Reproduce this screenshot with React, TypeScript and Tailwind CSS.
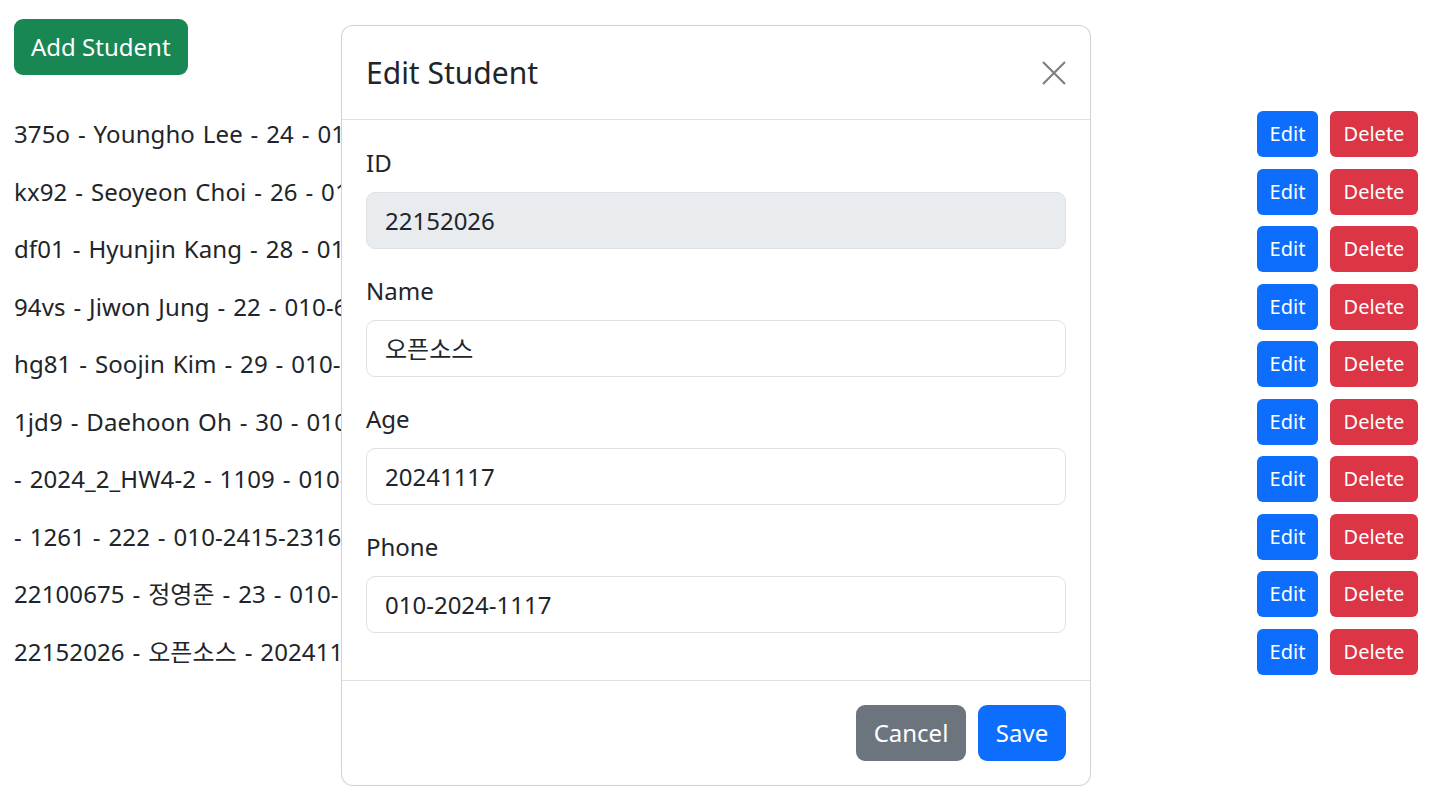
import React from 'react'

const students = [
  '375o - Youngho Lee - 24 - 010-1234-5678',
  'kx92 - Seoyeon Choi - 26 - 010-2345-6789',
  'df01 - Hyunjin Kang - 28 - 010-3456-7890',
  '94vs - Jiwon Jung - 22 - 010-6543-2109',
  'hg81 - Soojin Kim - 29 - 010-7654-3210',
  '1jd9 - Daehoon Oh - 30 - 010-8765-4321',
  ' - 2024_2_HW4-2 - 1109 - 010-1109-2024',
  ' - 1261 - 222 - 010-2415-2316',
  '22100675 - 정영준 - 23 - 010-1234-0675',
  '22152026 - 오픈소스 - 20241117 - 010-2024-1117',
]

const fields = [
  { label: 'ID', value: '22152026', readOnly: true },
  { label: 'Name', value: '오픈소스', readOnly: false },
  { label: 'Age', value: '20241117', readOnly: false },
  { label: 'Phone', value: '010-2024-1117', readOnly: false },
]

const App = () => {
  return (
    <div
      className="relative min-h-[801px] bg-white text-[#212529] text-[24px] leading-[36px]"
      style={{ fontFamily: '"Noto Sans", "Noto Sans CJK KR", sans-serif' }}
    >
      <div className="pl-[14px] pr-[19px] pt-[19px]">
        <button className="h-[56px] px-[17px] rounded-[9px] bg-[#198754] text-white text-[24px]">
          Add Student
        </button>

        <ul className="mt-[36px] flex flex-col gap-[11.5px]">
          {students.map((s, i) => (
            <li key={i} className="h-[46px] flex items-center justify-between">
              <span className="[word-spacing:1.5px] tracking-[0.1px]">{s.trim()}</span>
              <div className="flex gap-[12px]">
                <button className="h-[46px] w-[61px] rounded-[6px] bg-[#0d6efd] text-white text-[20px]">Edit</button>
                <button className="h-[46px] w-[88px] rounded-[6px] bg-[#dc3545] text-white text-[20px]">Delete</button>
              </div>
            </li>
          ))}
        </ul>
      </div>

      {/* modal */}
      <div className="absolute left-[341px] top-[25px] w-[750px] h-[761px] bg-white border border-black/[0.175] rounded-[12px] flex flex-col">
        <div className="h-[94px] px-[24px] flex items-center justify-between border-b border-[#dee2e6]">
          <h5 className="text-[30px] leading-[36px] font-normal">Edit Student</h5>
          <button className="w-[24px] h-[24px] text-[#808080]">
            <svg viewBox="0 0 24 24" width="24" height="24" stroke="currentColor" strokeWidth="2.2" fill="none">
              <path d="M1 1L23 23M23 1L1 23" />
            </svg>
          </button>
        </div>
        <div className="flex-1 px-[24px] pt-[25px]">
          {fields.map((f) => (
            <div key={f.label} className="mb-[24px]">
              <label className="block mb-[11px]">{f.label}</label>
              <div
                className={
                  'h-[57px] px-[18px] flex items-center rounded-[9px] border border-[#dee2e6] ' +
                  (f.readOnly ? 'bg-[#e9ecef]' : 'bg-white')
                }
              >
                {f.value}
              </div>
            </div>
          ))}
        </div>
        <div className="h-[105px] px-[24px] flex items-center justify-end gap-[12px] border-t border-[#dee2e6]">
          <button className="h-[56px] w-[110px] rounded-[9px] bg-[#6c757d] text-white">Cancel</button>
          <button className="h-[56px] w-[88px] rounded-[9px] bg-[#0d6efd] text-white">Save</button>
        </div>
      </div>
    </div>
  )
}

export default App
